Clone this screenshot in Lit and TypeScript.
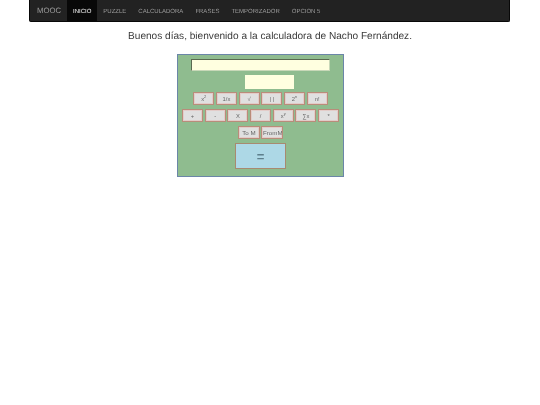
import { LitElement, html, css } from "lit";
import { customElement } from "lit/decorators.js";

const row1 = [html`x<sup>2</sup>`, "1/x", "√", "| |", html`2<sup>n</sup>`, "n!"];
const row2 = ["+", "-", "X", "/", html`x<sup>y</sup>`, "∑x", "*"];

@customElement("app-root")
export class AppRoot extends LitElement {
  static styles = css`
    :host { display: block; width: 540px; height: 405px; background: #fff; font-family: "Liberation Sans", Arial, sans-serif; overflow: hidden; text-rendering: geometricPrecision; }
    nav { box-sizing: border-box; width: 481px; height: 22px; margin: 0 0 0 29px; background: #222; border: 1px solid #080808; border-top: 0; border-radius: 0 0 2px 2px; display: flex; align-items: stretch; will-change: transform; }
    .brand { color: #9d9d9d; font-size: 7.8px; width: 37px; padding: 0 0 0 7px; box-sizing: border-box; display: flex; align-items: center; }
    .link { color: #9d9d9d; font-size: 6px; padding: 2px 6px 0; display: flex; align-items: center; white-space: nowrap; }
    .link.active { color: #fff; background: #080808; }
    h1 { margin: 9px 0 0; height: 12px; font-size: 10.1px; line-height: 12px; font-weight: 400; color: #3a3a3a; text-align: center; will-change: transform; }
    .calc { box-sizing: border-box; width: 167px; height: 123px; margin: 11px 0 0 177px; background: #8fbc8f; border: 1px solid #6b86a8; display: flex; flex-direction: column; align-items: center; will-change: transform; }
    .display { box-sizing: border-box; width: 139px; height: 12px; margin-top: 4px; background: #ffffe0; border: 1px solid; border-color: #5a6a50 #c8d8b8 #c8d8b8 #5a6a50; }
    .mem { width: 49px; height: 14px; margin: 4px 0 0 18px; background: #ffffe0; }
    .row { display: flex; gap: 1.7px; justify-content: center; }
    .r1 { margin-top: 3px; }
    .r2 { margin-top: 4px; }
    .r3 { margin-top: 4px; gap: 1px; }
    button { box-sizing: border-box; width: 21px; height: 13px; padding: 0 1px; background: #e0e0e0; border: 1px solid #b98c7a; box-shadow: inset 0 0 0 1px rgba(235, 160, 150, 0.3); color: #666; font: 5.8px "Liberation Sans", Arial, sans-serif; overflow: hidden; white-space: nowrap; }
    button sup { font-size: 4px; line-height: 0; }
    .wide { width: 22px; font-size: 6.2px; }
    .eq { width: 51px; height: 26px; margin-top: 4px; background: #add8e6; border: 1px solid #a88a70; box-shadow: none; font-size: 13px; font-weight: 700; color: #5d7f8c; }
  `;

  render() {
    return html`
      <nav>
        <span class="brand">MOOC</span>
        <span class="link active">INICIO</span>
        ${["PUZZLE", "CALCULADORA", "FRASES", "TEMPORIZADOR", "OPCION 5"].map((l) => html`<span class="link">${l}</span>`)}
      </nav>
      <h1>Buenos días, bienvenido a la calculadora de Nacho Fernández.</h1>
      <div class="calc">
        <div class="display"></div>
        <div class="mem"></div>
        <div class="row r1">${row1.map((b) => html`<button>${b}</button>`)}</div>
        <div class="row r2">${row2.map((b) => html`<button>${b}</button>`)}</div>
        <div class="row r3"><button class="wide">To M</button><button class="wide">FromM</button></div>
        <button class="eq">=</button>
      </div>
    `;
  }
}
